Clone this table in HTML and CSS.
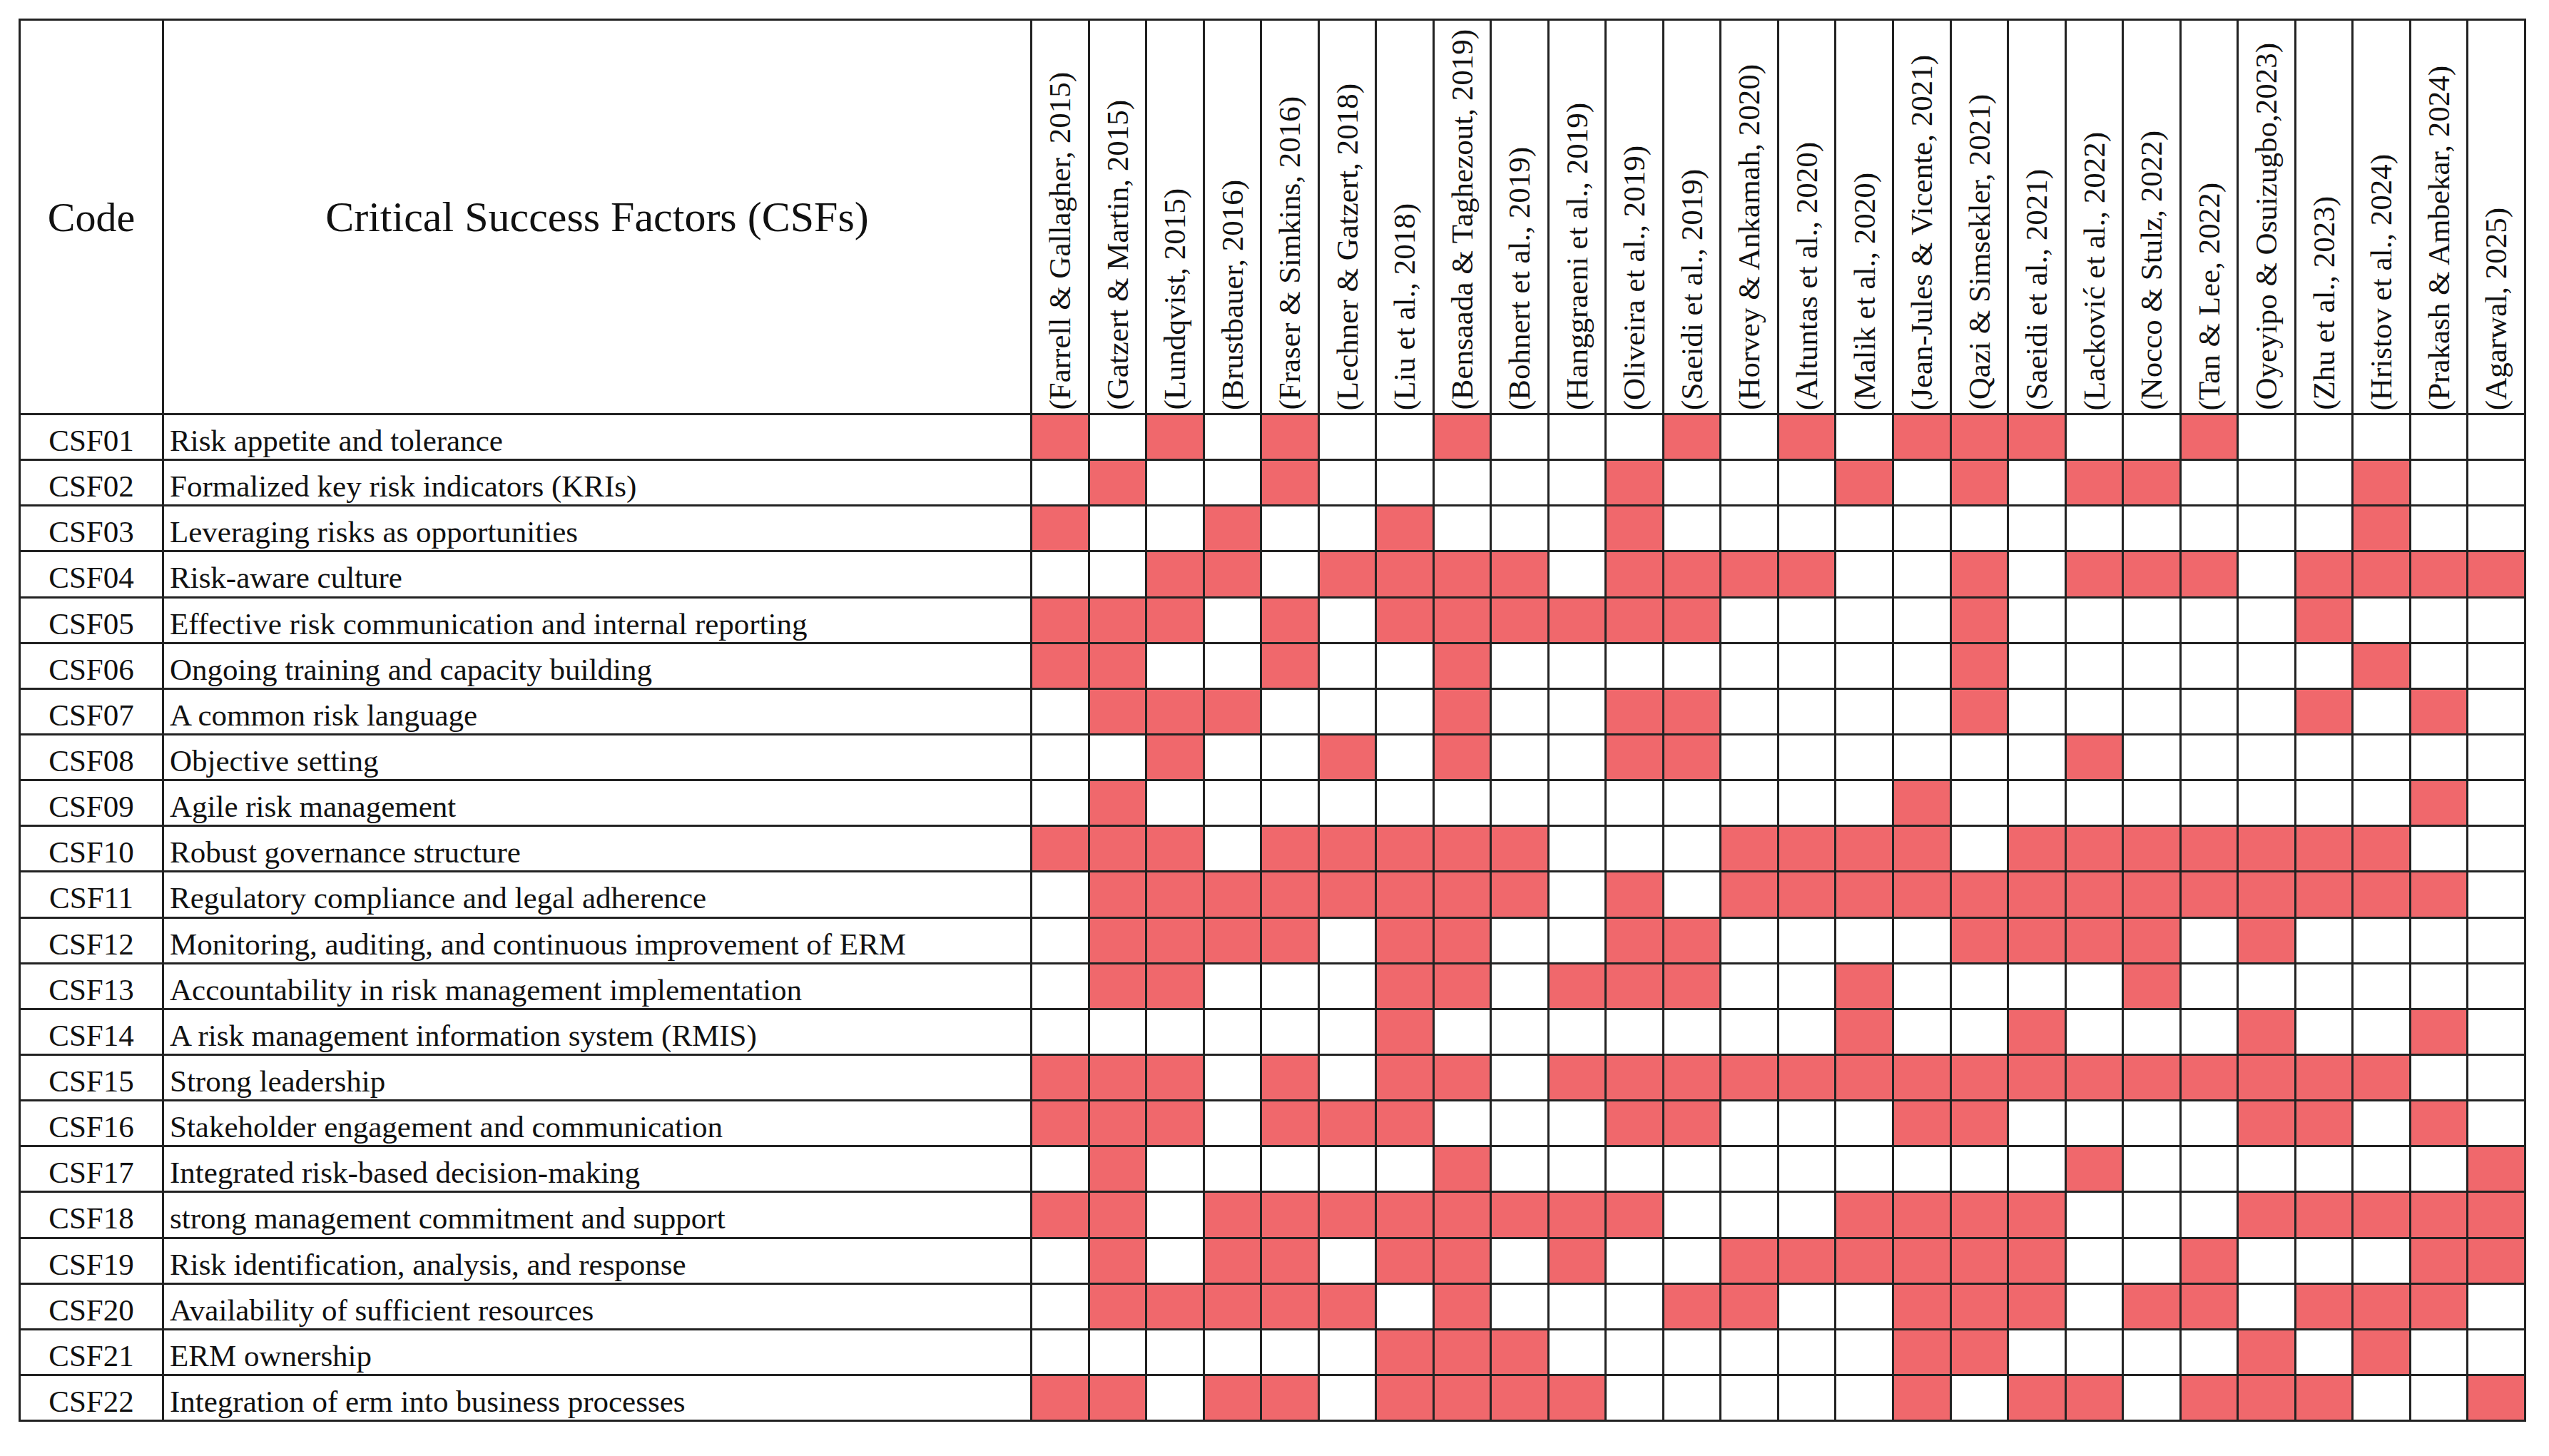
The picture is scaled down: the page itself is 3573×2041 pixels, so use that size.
FILE: index.html
```html
<!DOCTYPE html>
<html lang="en">
<head>
<meta charset="utf-8">
<title>Critical Success Factors matrix</title>
<link rel="stylesheet" href="styles.css">
</head>
<body>
<table class="matrix">
<colgroup>
<col class="code-col"><col class="name-col">
<col><col><col><col><col><col><col><col><col><col><col><col><col>
<col><col><col><col><col><col><col><col><col><col><col><col><col>
</colgroup>
<thead>
<tr class="head-row">
<th class="code-h">Code</th>
<th class="name-h">Critical Success Factors (CSFs)</th>
<th class="ref"><span>(Farrell &amp; Gallagher, 2015)</span></th>
<th class="ref"><span>(Gatzert &amp; Martin, 2015)</span></th>
<th class="ref"><span>(Lundqvist, 2015)</span></th>
<th class="ref"><span>(Brustbauer, 2016)</span></th>
<th class="ref"><span>(Fraser &amp; Simkins, 2016)</span></th>
<th class="ref"><span>(Lechner &amp; Gatzert, 2018)</span></th>
<th class="ref"><span>(Liu et al., 2018)</span></th>
<th class="ref"><span>(Bensaada &amp; Taghezout, 2019)</span></th>
<th class="ref"><span>(Bohnert et al., 2019)</span></th>
<th class="ref"><span>(Hanggraeni et al., 2019)</span></th>
<th class="ref"><span>(Oliveira et al., 2019)</span></th>
<th class="ref"><span>(Saeidi et al., 2019)</span></th>
<th class="ref"><span>(Horvey &amp; Ankamah, 2020)</span></th>
<th class="ref"><span>(Altuntas et al., 2020)</span></th>
<th class="ref"><span>(Malik et al., 2020)</span></th>
<th class="ref"><span>(Jean-Jules &amp; Vicente, 2021)</span></th>
<th class="ref"><span>(Qazi &amp; Simsekler, 2021)</span></th>
<th class="ref"><span>(Saeidi et al., 2021)</span></th>
<th class="ref"><span>(Lacković et al., 2022)</span></th>
<th class="ref"><span>(Nocco &amp; Stulz, 2022)</span></th>
<th class="ref"><span>(Tan &amp; Lee, 2022)</span></th>
<th class="ref"><span>(Oyeyipo &amp; Osuizugbo,2023)</span></th>
<th class="ref"><span>(Zhu et al., 2023)</span></th>
<th class="ref"><span>(Hristov et al., 2024)</span></th>
<th class="ref"><span>(Prakash &amp; Ambekar, 2024)</span></th>
<th class="ref"><span>(Agarwal, 2025)</span></th>
</tr>
</thead>
<tbody>
<tr><td class="code">CSF01</td><td class="name">Risk appetite and tolerance</td><td class="y"></td><td></td><td class="y"></td><td></td><td class="y"></td><td></td><td></td><td class="y"></td><td></td><td></td><td></td><td class="y"></td><td></td><td class="y"></td><td></td><td class="y"></td><td class="y"></td><td class="y"></td><td></td><td></td><td class="y"></td><td></td><td></td><td></td><td></td><td></td></tr>
<tr><td class="code">CSF02</td><td class="name">Formalized key risk indicators (KRIs)</td><td></td><td class="y"></td><td></td><td></td><td class="y"></td><td></td><td></td><td></td><td></td><td></td><td class="y"></td><td></td><td></td><td></td><td class="y"></td><td></td><td class="y"></td><td></td><td class="y"></td><td class="y"></td><td></td><td></td><td></td><td class="y"></td><td></td><td></td></tr>
<tr><td class="code">CSF03</td><td class="name">Leveraging risks as opportunities</td><td class="y"></td><td></td><td></td><td class="y"></td><td></td><td></td><td class="y"></td><td></td><td></td><td></td><td class="y"></td><td></td><td></td><td></td><td></td><td></td><td></td><td></td><td></td><td></td><td></td><td></td><td></td><td class="y"></td><td></td><td></td></tr>
<tr><td class="code">CSF04</td><td class="name">Risk-aware culture</td><td></td><td></td><td class="y"></td><td class="y"></td><td></td><td class="y"></td><td class="y"></td><td class="y"></td><td class="y"></td><td></td><td class="y"></td><td class="y"></td><td class="y"></td><td class="y"></td><td></td><td></td><td class="y"></td><td></td><td class="y"></td><td class="y"></td><td class="y"></td><td></td><td class="y"></td><td class="y"></td><td class="y"></td><td class="y"></td></tr>
<tr><td class="code">CSF05</td><td class="name">Effective risk communication and internal reporting</td><td class="y"></td><td class="y"></td><td class="y"></td><td></td><td class="y"></td><td></td><td class="y"></td><td class="y"></td><td class="y"></td><td class="y"></td><td class="y"></td><td class="y"></td><td></td><td></td><td></td><td></td><td class="y"></td><td></td><td></td><td></td><td></td><td></td><td class="y"></td><td></td><td></td><td></td></tr>
<tr><td class="code">CSF06</td><td class="name">Ongoing training and capacity building</td><td class="y"></td><td class="y"></td><td></td><td></td><td class="y"></td><td></td><td></td><td class="y"></td><td></td><td></td><td></td><td></td><td></td><td></td><td></td><td></td><td class="y"></td><td></td><td></td><td></td><td></td><td></td><td></td><td class="y"></td><td></td><td></td></tr>
<tr><td class="code">CSF07</td><td class="name">A common risk language</td><td></td><td class="y"></td><td class="y"></td><td class="y"></td><td></td><td></td><td></td><td class="y"></td><td></td><td></td><td class="y"></td><td class="y"></td><td></td><td></td><td></td><td></td><td class="y"></td><td></td><td></td><td></td><td></td><td></td><td class="y"></td><td></td><td class="y"></td><td></td></tr>
<tr><td class="code">CSF08</td><td class="name">Objective setting</td><td></td><td></td><td class="y"></td><td></td><td></td><td class="y"></td><td></td><td class="y"></td><td></td><td></td><td class="y"></td><td class="y"></td><td></td><td></td><td></td><td></td><td></td><td></td><td class="y"></td><td></td><td></td><td></td><td></td><td></td><td></td><td></td></tr>
<tr><td class="code">CSF09</td><td class="name">Agile risk management</td><td></td><td class="y"></td><td></td><td></td><td></td><td></td><td></td><td></td><td></td><td></td><td></td><td></td><td></td><td></td><td></td><td class="y"></td><td></td><td></td><td></td><td></td><td></td><td></td><td></td><td></td><td class="y"></td><td></td></tr>
<tr><td class="code">CSF10</td><td class="name">Robust governance structure</td><td class="y"></td><td class="y"></td><td class="y"></td><td></td><td class="y"></td><td class="y"></td><td class="y"></td><td class="y"></td><td class="y"></td><td></td><td></td><td></td><td class="y"></td><td class="y"></td><td class="y"></td><td class="y"></td><td></td><td class="y"></td><td class="y"></td><td class="y"></td><td class="y"></td><td class="y"></td><td class="y"></td><td class="y"></td><td></td><td></td></tr>
<tr><td class="code">CSF11</td><td class="name">Regulatory compliance and legal adherence</td><td></td><td class="y"></td><td class="y"></td><td class="y"></td><td class="y"></td><td class="y"></td><td class="y"></td><td class="y"></td><td class="y"></td><td></td><td class="y"></td><td></td><td class="y"></td><td class="y"></td><td class="y"></td><td class="y"></td><td class="y"></td><td class="y"></td><td class="y"></td><td class="y"></td><td class="y"></td><td class="y"></td><td class="y"></td><td class="y"></td><td class="y"></td><td></td></tr>
<tr><td class="code">CSF12</td><td class="name">Monitoring, auditing, and continuous improvement of ERM</td><td></td><td class="y"></td><td class="y"></td><td class="y"></td><td class="y"></td><td></td><td class="y"></td><td class="y"></td><td></td><td></td><td class="y"></td><td class="y"></td><td></td><td></td><td></td><td></td><td class="y"></td><td class="y"></td><td class="y"></td><td class="y"></td><td></td><td class="y"></td><td></td><td></td><td></td><td></td></tr>
<tr><td class="code">CSF13</td><td class="name">Accountability in risk management implementation</td><td></td><td class="y"></td><td class="y"></td><td></td><td></td><td></td><td class="y"></td><td class="y"></td><td></td><td class="y"></td><td class="y"></td><td class="y"></td><td></td><td></td><td class="y"></td><td></td><td></td><td></td><td></td><td class="y"></td><td></td><td></td><td></td><td></td><td></td><td></td></tr>
<tr><td class="code">CSF14</td><td class="name">A risk management information system (RMIS)</td><td></td><td></td><td></td><td></td><td></td><td></td><td class="y"></td><td></td><td></td><td></td><td></td><td></td><td></td><td></td><td class="y"></td><td></td><td></td><td class="y"></td><td></td><td></td><td></td><td class="y"></td><td></td><td></td><td class="y"></td><td></td></tr>
<tr><td class="code">CSF15</td><td class="name">Strong leadership</td><td class="y"></td><td class="y"></td><td class="y"></td><td></td><td class="y"></td><td></td><td class="y"></td><td class="y"></td><td></td><td class="y"></td><td class="y"></td><td class="y"></td><td class="y"></td><td class="y"></td><td class="y"></td><td class="y"></td><td class="y"></td><td class="y"></td><td class="y"></td><td class="y"></td><td class="y"></td><td class="y"></td><td class="y"></td><td class="y"></td><td></td><td></td></tr>
<tr><td class="code">CSF16</td><td class="name">Stakeholder engagement and communication</td><td class="y"></td><td class="y"></td><td class="y"></td><td></td><td class="y"></td><td class="y"></td><td class="y"></td><td></td><td></td><td></td><td class="y"></td><td class="y"></td><td></td><td></td><td></td><td class="y"></td><td class="y"></td><td></td><td></td><td></td><td></td><td class="y"></td><td class="y"></td><td></td><td class="y"></td><td></td></tr>
<tr><td class="code">CSF17</td><td class="name">Integrated risk-based decision-making</td><td></td><td class="y"></td><td></td><td></td><td></td><td></td><td></td><td class="y"></td><td></td><td></td><td></td><td></td><td></td><td></td><td></td><td></td><td></td><td></td><td class="y"></td><td></td><td></td><td></td><td></td><td></td><td></td><td class="y"></td></tr>
<tr><td class="code">CSF18</td><td class="name">strong management commitment and support</td><td class="y"></td><td class="y"></td><td></td><td class="y"></td><td class="y"></td><td class="y"></td><td class="y"></td><td class="y"></td><td class="y"></td><td class="y"></td><td class="y"></td><td></td><td></td><td></td><td class="y"></td><td class="y"></td><td class="y"></td><td class="y"></td><td></td><td></td><td></td><td class="y"></td><td class="y"></td><td class="y"></td><td class="y"></td><td class="y"></td></tr>
<tr><td class="code">CSF19</td><td class="name">Risk identification, analysis, and response</td><td></td><td class="y"></td><td></td><td class="y"></td><td class="y"></td><td></td><td class="y"></td><td class="y"></td><td></td><td class="y"></td><td></td><td></td><td class="y"></td><td class="y"></td><td class="y"></td><td class="y"></td><td class="y"></td><td class="y"></td><td></td><td></td><td class="y"></td><td></td><td></td><td></td><td class="y"></td><td class="y"></td></tr>
<tr><td class="code">CSF20</td><td class="name">Availability of sufficient resources</td><td></td><td class="y"></td><td class="y"></td><td class="y"></td><td class="y"></td><td class="y"></td><td></td><td class="y"></td><td></td><td></td><td></td><td class="y"></td><td class="y"></td><td></td><td></td><td class="y"></td><td class="y"></td><td class="y"></td><td></td><td class="y"></td><td class="y"></td><td></td><td class="y"></td><td class="y"></td><td class="y"></td><td></td></tr>
<tr><td class="code">CSF21</td><td class="name">ERM ownership</td><td></td><td></td><td></td><td></td><td></td><td></td><td class="y"></td><td class="y"></td><td class="y"></td><td></td><td></td><td></td><td></td><td></td><td></td><td class="y"></td><td class="y"></td><td></td><td></td><td></td><td></td><td class="y"></td><td></td><td class="y"></td><td></td><td></td></tr>
<tr><td class="code">CSF22</td><td class="name">Integration of erm into business processes</td><td class="y"></td><td class="y"></td><td></td><td class="y"></td><td class="y"></td><td></td><td class="y"></td><td class="y"></td><td class="y"></td><td class="y"></td><td></td><td></td><td></td><td></td><td></td><td class="y"></td><td></td><td class="y"></td><td class="y"></td><td></td><td class="y"></td><td class="y"></td><td class="y"></td><td></td><td></td><td class="y"></td></tr>
</tbody>
</table>
</body>
</html>
```
FILE: styles.css
```css
html, body {
  margin: 0;
  background: #ffffff;
}

body {
  padding: 26px 0 0 26px;
  font-family: "Liberation Serif", "Times New Roman", serif;
  color: #111111;
}

.matrix {
  border-collapse: collapse;
  table-layout: fixed;
  width: 3515px;
}

.matrix th,
.matrix td {
  border: 3px solid #222222;
  padding: 0;
}

.code-col {
  width: 201px;
}

.name-col {
  width: 1217px;
}

.head-row {
  height: 553px;
}

.code-h,
.name-h {
  font-size: 58px;
  font-weight: normal;
  text-align: center;
  vertical-align: middle;
}

.name-h {
  font-size: 60px;
}

.ref {
  font-weight: normal;
  text-align: center;
  vertical-align: bottom;
  padding-bottom: 6px;
}

.ref span {
  display: inline-block;
  writing-mode: vertical-rl;
  transform: rotate(180deg);
  font-size: 43px;
  line-height: 1.1;
  white-space: nowrap;
}

.matrix tbody tr {
  height: 64.15px;
}

.matrix td.code {
  font-size: 43px;
  text-align: center;
  padding-top: 10px;
}

.matrix td.name {
  font-size: 43px;
  padding: 10px 0 0 8px;
  white-space: nowrap;
}

.matrix td.y {
  background: #f0686c;
}
```
